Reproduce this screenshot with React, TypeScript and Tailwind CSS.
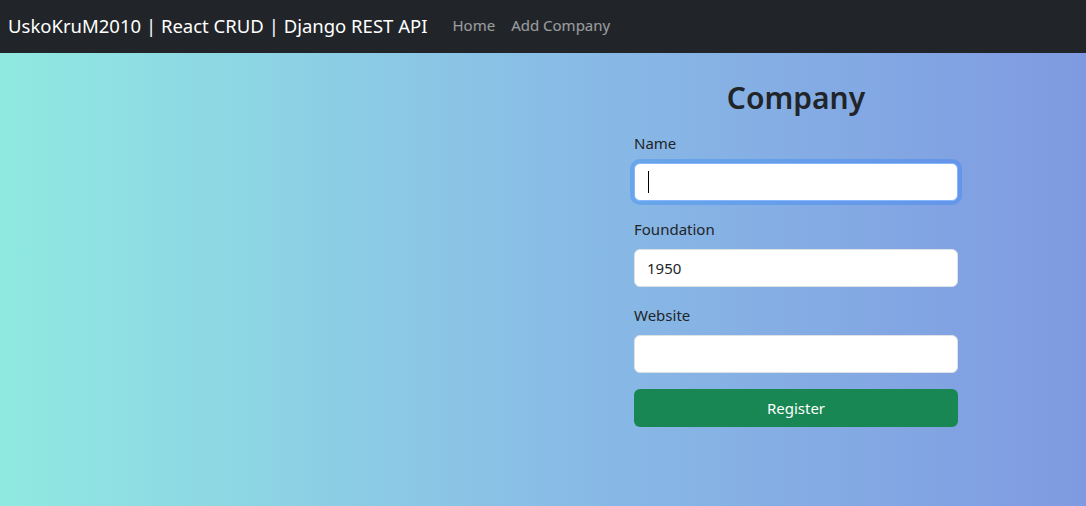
const FONT = "font-['Segoe_UI','Noto_Sans',sans-serif]";

function Field({ label, value, focused }: { label: string; value?: string; focused?: boolean }) {
  return (
    <div className="mb-4">
      <label className="mb-2 block text-[15px] leading-6 text-[#212529]">{label}</label>
      <div
        className={
          focused
            ? "flex h-[38px] items-center rounded-[6px] border border-[#86b7fe] bg-white px-3 shadow-[0_0_0_4px_rgba(13,110,253,0.25)]"
            : "flex h-[38px] items-center rounded-[6px] border border-[#dee2e6] bg-white px-3"
        }
      >
        {focused && <span className="ml-[1px] h-[22px] w-px bg-black" />}
        {value && <span className="text-[15px] text-[#212529]">{value}</span>}
      </div>
    </div>
  );
}

export default function App() {
  return (
    <div className={`${FONT} flex h-[506px] flex-col`}>
      <nav className="flex h-[53px] shrink-0 items-center bg-[#212529] pb-[2px] pl-2">
        <span className="mr-[25px] text-[18.5px] leading-[30px] text-white">
          UskoKruM2010 | React CRUD | Django REST API
        </span>
        <a className="mr-4 text-[15px] text-white/55">Home</a>
        <a className="text-[15px] text-white/55">Add Company</a>
      </nav>
      <main className="flex flex-1 justify-end bg-gradient-to-r from-[#90e9e1] via-[#89bde6] to-[#7f9ae1] pr-[128px]">
        <form className="w-[324px] pt-[26px]">
          <h2 className="mb-[14px] text-center text-[30px] font-semibold leading-[38px] text-[#212529]">
            Company
          </h2>
          <Field label="Name" focused />
          <Field label="Foundation" value="1950" />
          <Field label="Website" />
          <button
            type="button"
            className="h-[38px] w-full rounded-[6px] bg-[#198754] text-[15px] text-white"
          >
            Register
          </button>
        </form>
      </main>
    </div>
  );
}
